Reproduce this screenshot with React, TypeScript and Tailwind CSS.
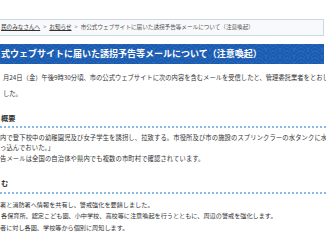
const crumbs = ['民のみなさんへ', 'お知らせ'];

const outline = [
  '内で登下校中の幼稚園児及び女子学生を誘拐し、拉致する。市役所及び市の施設のスプリンクラーの水タンクに水銀を放',
  'っ込んでおいた。」',
  '告メールは全国の自治体や県内でも複数の市町村で確認されています。',
];

const actions = [
  '署と消防署へ情報を共有し、警戒強化を要請しました。',
  '各保育所、認定こども園、小中学校、高校等に注意喚起を行うとともに、周辺の警戒を強化します。',
  '者に対し各園、学校等から個別に周知します。',
];

export default function App() {
  return (
    <div
      className="w-[326px] h-[245px] overflow-hidden bg-white text-[#333]"
      style={{ fontFamily: '"Noto Sans CJK JP", "Noto Sans", sans-serif' }}
    >
      <div className="pt-[19px]">
        <nav className="mr-[2px] h-[17px] border border-l-0 border-[#c9d7e6] bg-[#f8f9fb] flex items-center pl-[1px] text-[5.6px] text-[#555] whitespace-nowrap">
          {crumbs.map(c => (
            <span key={c} className="flex items-center">
              <span className="underline text-[#333]">{c}</span>
              <span className="mx-[3px] text-[#888]">&gt;</span>
            </span>
          ))}
          <span>市公式ウェブサイトに届いた誘拐予告等メールについて（注意喚起）</span>
        </nav>

        <h1 className="mt-[8px] mr-[2px] h-[20px] bg-[#1b5cb3] bg-[repeating-radial-gradient(circle_at_50%_100%,rgba(255,255,255,0.06)_0_1px,transparent_1px_3px)] bg-size-[14px_7px] text-white font-bold text-[9px] flex items-center pl-[1px] whitespace-nowrap">
          式ウェブサイトに届いた誘拐予告等メールについて（注意喚起）
        </h1>

        <p className="mt-[6px] pl-[3px] text-[6.3px] leading-[16px] whitespace-nowrap">
          月24日（金）午後9時30分頃、市の公式ウェブサイトに次の内容を含むメールを受信したと、管理委託業者をとおし
          <br />
          した。
        </p>

        <h2 className="mt-[10px] pl-[1px] text-[7.2px] leading-[12px] font-bold pb-[2px] border-b-2 border-dotted border-[#86bbe8]">
          概要
        </h2>
        <ul className="mt-[4.5px] text-[6.3px] tracking-[0.12px] leading-[10.5px] whitespace-nowrap">
          {outline.map(t => <li key={t}>{t}</li>)}
        </ul>

        <h2 className="mt-[12.5px] pl-[1px] text-[7.2px] leading-[12px] font-bold pb-[3px] border-b-2 border-dotted border-[#86bbe8]">
          む
        </h2>
        <ul className="mt-[5px] text-[6.15px] leading-[11.5px] whitespace-nowrap">
          {actions.map((t, i) => <li key={t} className={i === 1 ? 'pl-[1px]' : ''}>{t}</li>)}
        </ul>
      </div>
    </div>
  );
}
